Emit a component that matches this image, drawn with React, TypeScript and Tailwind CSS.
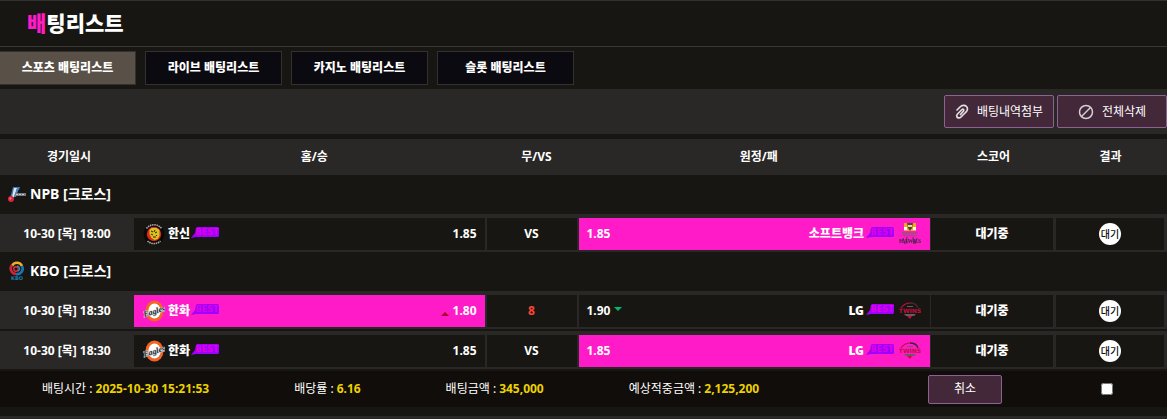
import type { ReactNode } from "react";

type Side = {
  name: string;
  odds: string;
  logo: ReactNode;
  picked?: boolean;
  trend?: "up" | "down";
};

type Game = {
  id: number;
  date: string;
  home: Side;
  middle: string;
  away: Side;
};

type League = {
  name: string;
  logo: ReactNode;
  games: Game[];
};

const TABS = ["스포츠 배팅리스트", "라이브 배팅리스트", "카지노 배팅리스트", "슬롯 배팅리스트"];

function NpbLogo() {
  return (
    <svg width="18" height="18" viewBox="0 0 18 18" aria-hidden="true">
      <path d="M5 2h7l-1 3H9L6 13H2z" fill="#3f77b5" />
      <path d="M6 3h3L6 12H4z" fill="#dfe8f2" />
      <path d="M9 3h2L8 12H6z" fill="#4b83bd" />
      <circle cx="3" cy="14" r="3" fill="#d7263a" />
      <circle cx="2.4" cy="13.4" r="1" fill="#f28a94" />
      <path d="M7 8h11v3H7z" fill="#77797e" />
      <path d="M8 9.500h9" stroke="#c7c9cc" strokeWidth="1" strokeDasharray="2 1" />
    </svg>
  );
}

function KboLogo() {
  return (
    <svg width="18" height="20" viewBox="0 0 18 20" aria-hidden="true">
      <path d="M4 5a5.500 5.500 0 0 1 10 0" fill="none" stroke="#efb023" strokeWidth="2.600" />
      <path d="M4 4a5.500 5.500 0 0 0 4 9" fill="none" stroke="#cf2439" strokeWidth="2.600" />
      <path d="M14 5a5.500 5.500 0 0 1-6 8" fill="none" stroke="#1b75b0" strokeWidth="2.600" />
      <circle cx="8" cy="8" r="2.200" fill="none" stroke="#d93440" strokeWidth="1.400" />
      <path d="M9 5a2.600 2.600 0 0 1 1 5" fill="none" stroke="#2687bf" strokeWidth="1.400" />
      <text x="9" y="19" textAnchor="middle" fontSize="5" fontWeight="700" fill="#1b7eb0" fontFamily="DejaVu Sans">
        KBO
      </text>
    </svg>
  );
}

function TigersLogo() {
  return (
    <svg width="22" height="22" viewBox="0 0 22 22" aria-hidden="true">
      <circle cx="11" cy="11" r="10.500" fill="#090909" />
      <path d="M3.500 5.500A9.400 9.400 0 0 1 18.500 5.500" fill="none" stroke="#a5a5a5" strokeWidth="1.600" strokeDasharray="1.600 .6" />
      <path d="M4.500 18A9.400 9.400 0 0 0 17.500 18" fill="none" stroke="#a5a5a5" strokeWidth="1.600" strokeDasharray="1.600 .6" />
      <circle cx="11" cy="11" r="7.200" fill="#e3261c" />
      <path d="M6.500 7l2-2h5l3 2v6l-2 3-3 1-3-2-2-4z" fill="#d8c322" />
      <path d="M8 8l2 1M12 7l-1 2M14 9l-2 1M8 11l2 1M13 13l1-1M10 14h3" stroke="#2b210c" strokeWidth="1" />
    </svg>
  );
}

function EaglesLogo() {
  return (
    <svg width="22" height="22" viewBox="0 0 22 22" aria-hidden="true">
      <ellipse cx="11.500" cy="11" rx="9" ry="10.500" fill="#f26522" />
      <ellipse cx="11.500" cy="11" rx="6.200" ry="7.500" fill="#fff" />
      <text
        x="11"
        y="14"
        transform="rotate(-17 11 11)"
        textAnchor="middle"
        fontSize="8"
        fontStyle="italic"
        fontWeight="700"
        fontFamily="Liberation Serif"
        fill="#1c2a3c"
        stroke="#d9d9d9"
        strokeWidth="1"
        paintOrder="stroke"
      >
        Eagles
      </text>
    </svg>
  );
}

function HawksLogo() {
  return (
    <svg width="22" height="24" viewBox="0 0 22 24" aria-hidden="true">
      <path d="M5 1h12v8H5z" fill="#f4a813" />
      <path d="M5 5h3v3H5zM14 5h3v3h-3z" fill="#fff" />
      <path d="M8 1h6l-1 5-2 3-2-3z" fill="#4d4636" />
      <path d="M9 3h4v2H9z" fill="#ead9a4" />
      <path d="M3 11h16M4 13.500h14" stroke="#8d5578" strokeWidth="1.600" strokeDasharray="2 .6" />
      <text x="11" y="21" textAnchor="middle" fontSize="6" fontWeight="700" fontFamily="Liberation Serif" fill="#44293b">
        HAWKS
      </text>
      <path d="M4 16l2 6M8 15l-1 7M14 15l1 7M18 16l-2 6" stroke="#44293b" strokeWidth=".8" />
    </svg>
  );
}

function TwinsLogo() {
  return (
    <svg width="22" height="18" viewBox="0 0 22 18" aria-hidden="true">
      <path d="M2 6C5 1 10 1 12 1" fill="none" stroke="#c30f3f" strokeWidth="1.200" />
      <path d="M11 1c4 0 7 2 8 5" fill="none" stroke="#3a2b33" strokeWidth="1.400" />
      <path d="M8 4h6v1H8z" fill="#6b5a62" />
      <text x="11" y="11" textAnchor="middle" fontSize="6" fontWeight="700" fontFamily="DejaVu Sans" fill="#c30f3f">
        TWINS
      </text>
      <path d="M5 12h12l-2 2H7z" fill="#6b5a62" />
      <path d="M8 14h5l-2 3z" fill="#c30f3f" />
    </svg>
  );
}

function BestBadge() {
  return (
    <svg width="29" height="11" viewBox="0 0 29 11" role="img" aria-label="BEST" className="shrink-0">
      <path d="M0 11L4 6 5 1 6 0h21l1 1v8l-1 1H5z" fill="#a000ff" />
      <text x="16" y="8" textAnchor="middle" fontSize="8" fontWeight="700" fontFamily="DejaVu Sans" fill="#df00df">
        BEST
      </text>
    </svg>
  );
}

function ClipIcon() {
  return (
    <svg width="14" height="16" viewBox="0 0 14 16" fill="none" stroke="#e4dfe2" strokeWidth="1.700" strokeLinecap="round" aria-hidden="true">
      <path d="M2 6l3-3c2-2 5-2 6.500-.5s1.200 4-.5 5.500l-5 5c-1.500 1.500-3.500 1-4 0s-.5-2 .5-3l4.500-4.500c1-1 2.500 0 1.500 1.500L5.500 10.500" />
    </svg>
  );
}

function BanIcon() {
  return (
    <svg width="16" height="16" viewBox="0 0 16 16" fill="none" stroke="#d6ced3" strokeWidth="1.500" aria-hidden="true">
      <circle cx="8" cy="8" r="6.500" />
      <path d="M3.500 12.500l9-9" />
    </svg>
  );
}

function Trend({ dir }: { dir: "up" | "down" }) {
  return (
    <svg width="8" height="4" viewBox="0 0 8 4" aria-hidden="true" className={dir === "up" ? "mt-1.5" : "-mt-1"}>
      {dir === "up" ? <path d="M0 4L4 0l4 4z" fill="#a8002a" /> : <path d="M0 0h8L4 4z" fill="#00b96b" />}
    </svg>
  );
}

const LEAGUES: League[] = [
  {
    name: "NPB [크로스]",
    logo: <NpbLogo />,
    games: [
      {
        id: 1,
        date: "10-30 [목] 18:00",
        home: { name: "한신", odds: "1.85", logo: <TigersLogo /> },
        middle: "VS",
        away: { name: "소프트뱅크", odds: "1.85", logo: <HawksLogo />, picked: true },
      },
    ],
  },
  {
    name: "KBO [크로스]",
    logo: <KboLogo />,
    games: [
      {
        id: 2,
        date: "10-30 [목] 18:30",
        home: { name: "한화", odds: "1.80", logo: <EaglesLogo />, picked: true, trend: "up" },
        middle: "8",
        away: { name: "LG", odds: "1.90", logo: <TwinsLogo />, trend: "down" },
      },
      {
        id: 3,
        date: "10-30 [목] 18:30",
        home: { name: "한화", odds: "1.85", logo: <EaglesLogo /> },
        middle: "VS",
        away: { name: "LG", odds: "1.85", logo: <TwinsLogo />, picked: true },
      },
    ],
  },
];

const SUMMARY = [
  { label: "배팅시간", value: "2025-10-30 15:21:53" },
  { label: "배당률", value: "6.16" },
  { label: "배팅금액", value: "345,000" },
  { label: "예상적중금액", value: "2,125,200" },
];

const CELL = "h-[38px] border-[#292827] border-t-4 border-b-2 p-0";

function GameRow({ game }: { game: Game }) {
  const { home, away } = game;
  return (
    <tr>
      <td className={`${CELL} bg-[#292827] text-center`}>{game.date}</td>
      <td className={`${CELL} border-r-2 ${home.picked ? "bg-[#ff1bc8]" : "bg-[#171612]"}`}>
        <div className="flex items-center pr-2 pl-[9px]">
          <span className="flex w-[22px] justify-center">{home.logo}</span>
          <span className="ml-[3px] font-black">{home.name}</span>
          <span className="mb-1 ml-px">
            <BestBadge />
          </span>
          <span className="ml-auto flex items-center gap-1">
            {home.trend && <Trend dir={home.trend} />}
            {home.odds}
          </span>
        </div>
      </td>
      <td className={`${CELL} border-r-2 bg-[#171612] text-center ${game.middle === "VS" ? "" : "text-[#ff4433]"}`}>
        {game.middle}
      </td>
      <td className={`${CELL} border-r ${away.picked ? "bg-[#ff1bc8]" : "bg-[#171612]"}`}>
        <div className="flex items-center pr-[9px] pl-2">
          <span className="flex items-center gap-1">
            {away.odds}
            {away.trend && <Trend dir={away.trend} />}
          </span>
          <span className="ml-auto font-black">{away.name}</span>
          <span className="mr-1 mb-1 ml-0.5">
            <BestBadge />
          </span>
          <span className="flex w-[22px] justify-center">{away.logo}</span>
        </div>
      </td>
      <td className={`${CELL} border-r-[3px] bg-[#171612] text-center font-black`}>대기중</td>
      <td className={`${CELL} border-r-[3px] bg-[#171612]`}>
        <span className="mx-auto flex size-[22px] items-center justify-center rounded-full bg-white text-[10px] leading-none font-medium text-[#111]">
          대기
        </span>
      </td>
    </tr>
  );
}

export default function App() {
  return (
    <main className="min-h-screen border-t border-[#32312e] bg-[#171612] font-['Noto_Sans','Noto_Sans_CJK_KR',sans-serif] text-xs text-white">
      <header className="flex h-[46px] items-center border-b border-[#3a3936] pl-[27px]">
        <h1 className="text-[21px] leading-none font-black">
          <span className="text-[#ff1bc8]">배</span>팅리스트
        </h1>
      </header>

      <nav className="mt-1 flex gap-[9px]">
        {TABS.map((t, i) => (
          <button
            key={t}
            type="button"
            className={`h-[34px] border border-[#32312d] font-black ${
              i === 0 ? "w-[136px] border-l-0 bg-[#595147]" : "w-[137px] bg-[#0b0a10]"
            }`}
          >
            {t}
          </button>
        ))}
      </nav>

      <div className="mt-1 flex h-[45px] items-center justify-end gap-[3px] bg-[#292827]">
        <button
          type="button"
          className="flex h-[33px] w-[110px] items-center justify-center gap-2 rounded-xs border border-[#8d6192] bg-[#432839]"
        >
          <ClipIcon />
          배팅내역첨부
        </button>
        <button
          type="button"
          className="flex h-[33px] w-[110px] items-center justify-center gap-2 rounded-xs border border-[#8d6192] bg-[#432839]"
        >
          <BanIcon />
          전체삭제
        </button>
      </div>

      <table className="mt-[5px] w-full table-fixed border-separate border-spacing-0 font-bold">
        <colgroup>
          <col className="w-[134px]" />
          <col />
          <col className="w-[92px]" />
          <col />
          <col className="w-[125px]" />
          <col className="w-[111px]" />
        </colgroup>
        <thead>
          <tr className="h-9 bg-[#292827] font-black">
            <th className="p-0 pl-1">경기일시</th>
            <th className="p-0 pl-2">홈/승</th>
            <th className="p-0 pl-2">무/VS</th>
            <th className="p-0 pl-2">원정/패</th>
            <th className="p-0">스코어</th>
            <th className="p-0 pr-0.5">결과</th>
          </tr>
        </thead>
        {LEAGUES.map((league) => (
          <tbody key={league.name}>
            <tr>
              <th colSpan={6} className="h-[39px] p-0 pb-0.5 text-left text-sm font-bold">
                <div className="flex items-center gap-1 pl-2">
                  {league.logo}
                  {league.name}
                </div>
              </th>
            </tr>
            {league.games.flatMap((g, i) => [
              i > 0 && (
                <tr key={`gap-${g.id}`} aria-hidden="true">
                  <td colSpan={6} className="h-0.5 p-0" />
                </tr>
              ),
              <GameRow key={g.id} game={g} />,
            ])}
          </tbody>
        ))}
      </table>

      <div className="mt-0.5 flex h-9 items-center bg-[#110d0a] pr-[54px] pl-[42px]">
        <dl className="flex gap-[85px]">
          {SUMMARY.map((s) => (
            <div key={s.label} className="flex gap-[3px]">
              <dt>{s.label} :</dt>
              <dd className="font-bold text-[#ecd200]">{s.value}</dd>
            </div>
          ))}
        </dl>
        <button type="button" className="ml-auto h-[29px] w-[74px] rounded-xs border border-[#8d6192] bg-[#432839]">
          취소
        </button>
        <input type="checkbox" aria-label="배팅내역 선택" className="ml-[99px] size-3" />
      </div>
      <div className="mt-[9px] h-[3px] bg-[#292827]" />
    </main>
  );
}
